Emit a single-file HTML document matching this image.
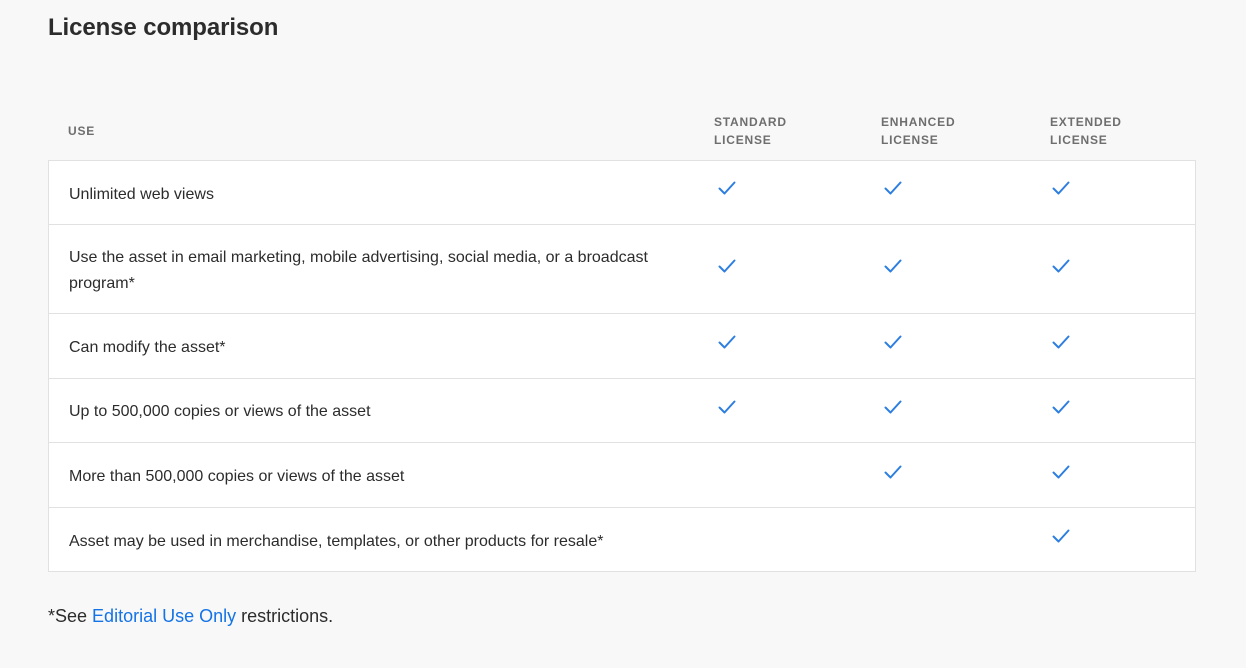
<!DOCTYPE html>
<html><head><style>
body{margin:0;width:1246px;height:668px;background:#f8f8f8;font-family:"Liberation Sans",sans-serif;position:relative;overflow:hidden;color:#2c2c2c}
.a{position:absolute}
h1{position:absolute;left:48px;top:14px;margin:0;font-size:24px;font-weight:bold;color:#2c2c2c;letter-spacing:-0.1px}
.h{font-size:12px;font-weight:bold;color:#6e6e6e;letter-spacing:0.8px;line-height:18px}
.tbl{position:absolute;left:48px;top:160px;width:1146px;height:410px;background:#fff;border:1px solid #e1e1e1}
.row{position:absolute;left:0;width:1146px;border-top:1px solid #e1e1e1}
.t{position:absolute;left:20px;font-size:16px;line-height:26px;color:#2c2c2c}
svg{position:absolute}
.f{left:48px;top:606px;font-size:18px}
.f span{color:#1473e6}
</style></head><body>
<h1>License comparison</h1>
<div class="a h" style="left:68px;top:122px">USE</div>
<div class="a h" style="left:714px;top:113px">STANDARD<br>LICENSE</div>
<div class="a h" style="left:881px;top:113px">ENHANCED<br>LICENSE</div>
<div class="a h" style="left:1050px;top:113px">EXTENDED<br>LICENSE</div>
<div class="tbl">
<div class="t" style="top:21px">Unlimited web views</div>
<div class="row" style="top:63px"></div>
<div class="t" style="top:84px;width:600px">Use the asset in email marketing, mobile advertising, social media, or a broadcast program*</div>
<div class="row" style="top:152px"></div>
<div class="t" style="top:174px">Can modify the asset*</div>
<div class="row" style="top:217px"></div>
<div class="t" style="top:238px">Up to 500,000 copies or views of the asset</div>
<div class="row" style="top:281px"></div>
<div class="t" style="top:303px">More than 500,000 copies or views of the asset</div>
<div class="row" style="top:346px"></div>
<div class="t" style="top:368px">Asset may be used in merchandise, templates, or other products for resale*</div>
</div>
<svg width="0" height="0"><defs><symbol id="c" viewBox="0 0 18 14"><path d="M1.5 7.5 L6.5 12.5 L16.5 1.5" fill="none" stroke="#2d7ee0" stroke-width="2" stroke-linecap="round" stroke-linejoin="round"/></symbol></defs></svg>
<svg style="left:718px;top:181px" width="18" height="14"><use href="#c"/></svg>
<svg style="left:884px;top:181px" width="18" height="14"><use href="#c"/></svg>
<svg style="left:1052px;top:181px" width="18" height="14"><use href="#c"/></svg>
<svg style="left:718px;top:259px" width="18" height="14"><use href="#c"/></svg>
<svg style="left:884px;top:259px" width="18" height="14"><use href="#c"/></svg>
<svg style="left:1052px;top:259px" width="18" height="14"><use href="#c"/></svg>
<svg style="left:718px;top:335px" width="18" height="14"><use href="#c"/></svg>
<svg style="left:884px;top:335px" width="18" height="14"><use href="#c"/></svg>
<svg style="left:1052px;top:335px" width="18" height="14"><use href="#c"/></svg>
<svg style="left:718px;top:400px" width="18" height="14"><use href="#c"/></svg>
<svg style="left:884px;top:400px" width="18" height="14"><use href="#c"/></svg>
<svg style="left:1052px;top:400px" width="18" height="14"><use href="#c"/></svg>
<svg style="left:884px;top:465px" width="18" height="14"><use href="#c"/></svg>
<svg style="left:1052px;top:465px" width="18" height="14"><use href="#c"/></svg>
<svg style="left:1052px;top:529px" width="18" height="14"><use href="#c"/></svg>
<div class="a f">*See <span>Editorial Use Only</span> restrictions.</div>
</body></html>
